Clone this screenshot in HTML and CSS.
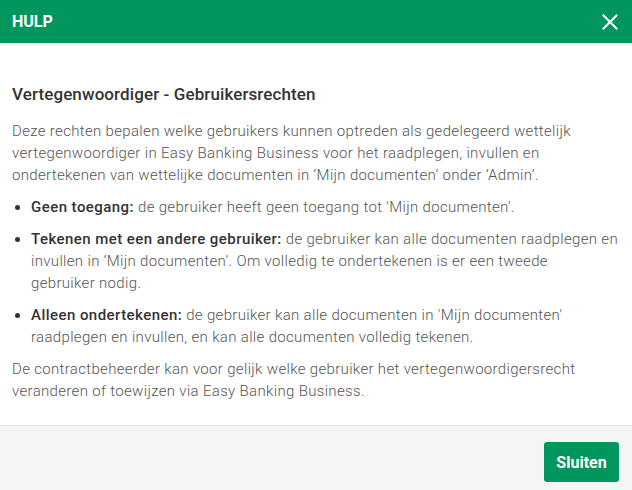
FILE: index.html
```html
<!DOCTYPE html>
<html lang="nl">
<head>
<meta charset="utf-8">
<title>Hulp</title>
<link rel="stylesheet" href="styles.css">
</head>
<body>
<div class="modal">
  <header class="modal-header">
    <h1 class="modal-title">HULP</h1>
    <button class="close-btn" aria-label="Sluiten">
      <svg width="16" height="16" viewBox="0 0 16 16"><path d="M1.5 1.5 L14.5 14.5 M14.5 1.5 L1.5 14.5" stroke="#fff" stroke-width="2" stroke-linecap="square" fill="none"/></svg>
    </button>
  </header>
  <main class="modal-body">
    <h2 class="section-title">Vertegenwoordiger - Gebruikersrechten</h2>
    <p class="text">Deze rechten bepalen welke gebruikers kunnen optreden als gedelegeerd wettelijk vertegenwoordiger in Easy Banking Business voor het raadplegen, invullen en ondertekenen van wettelijke documenten in ‘Mijn documenten’ onder ‘Admin’.</p>
    <ul class="rights">
      <li class="right"><span class="dot"></span><span class="right-text"><strong>Geen toegang:</strong> de gebruiker heeft geen toegang tot 'Mijn documenten'.</span></li>
      <li class="right"><span class="dot"></span><span class="right-text"><strong>Tekenen met een andere gebruiker:</strong> de gebruiker kan alle documenten raadplegen en invullen in ‘Mijn documenten’. Om volledig te ondertekenen is er een tweede gebruiker&nbsp;nodig.</span></li>
      <li class="right"><span class="dot"></span><span class="right-text"><strong>Alleen ondertekenen:</strong> de gebruiker kan alle documenten in 'Mijn documenten' raadplegen en invullen, en kan alle documenten volledig tekenen.</span></li>
    </ul>
    <p class="text">De contractbeheerder kan voor gelijk welke gebruiker het vertegenwoordigersrecht veranderen of toewijzen via Easy Banking Business.</p>
  </main>
  <footer class="modal-footer">
    <button class="primary-btn">Sluiten</button>
  </footer>
</div>
</body>
</html>
```
FILE: styles.css
```css
* { box-sizing: border-box; }
html, body { margin: 0; padding: 0; }
body {
  width: 632px;
  height: 490px;
  font-family: Roboto, "Liberation Sans", sans-serif;
  background: #fff;
  overflow: hidden;
}
.modal {
  display: flex;
  flex-direction: column;
  height: 490px;
}
.modal-header {
  height: 43px;
  background: #00965e;
  display: flex;
  align-items: center;
  justify-content: space-between;
  padding: 0 14px 0 12px;
}
.modal-title {
  margin: 0;
  color: #fff;
  font-size: 16px;
  font-weight: 700;
}
.close-btn {
  background: none;
  border: 0;
  padding: 0;
  width: 16px;
  height: 16px;
  display: flex;
  cursor: pointer;
}
.modal-body {
  flex: 1;
  padding: 40px 12px 0 12px;
}
.section-title {
  margin: 0 0 15px;
  font-size: 17px;
  line-height: 22px;
  font-weight: 500;
  letter-spacing: 0.1px;
  color: #333;
}
.text {
  margin: 0;
  font-size: 15px;
  line-height: 22px;
  font-weight: 300;
  letter-spacing: 0.33px;
  color: #555;
}
.rights {
  list-style: none;
  margin: 10px 0;
  padding: 0;
  display: flex;
  flex-direction: column;
  gap: 10px;
}
.right {
  display: flex;
  align-items: flex-start;
  gap: 11px;
  font-size: 15px;
  line-height: 22px;
  font-weight: 300;
  letter-spacing: 0.33px;
  color: #555;
}
.right-text { display: block; }
.right strong {
  font-weight: 500;
  letter-spacing: 0.45px;
  color: #333;
}
.dot {
  flex: none;
  width: 5px;
  height: 5px;
  border-radius: 50%;
  background: #333;
  margin: 9px 0 0 3px;
}
.modal-footer {
  height: 65px;
  border-top: 1px solid #e2e2e2;
  background: #f5f5f5;
  display: flex;
  justify-content: flex-end;
  align-items: flex-start;
  padding: 16px 13px 0 0;
}
.primary-btn {
  width: 75px;
  height: 40px;
  background: #00965e;
  color: #fff;
  border: 0;
  border-radius: 3px;
  font-family: Roboto, "Liberation Sans", sans-serif;
  font-size: 16px;
  font-weight: 700;
  cursor: pointer;
}
```
